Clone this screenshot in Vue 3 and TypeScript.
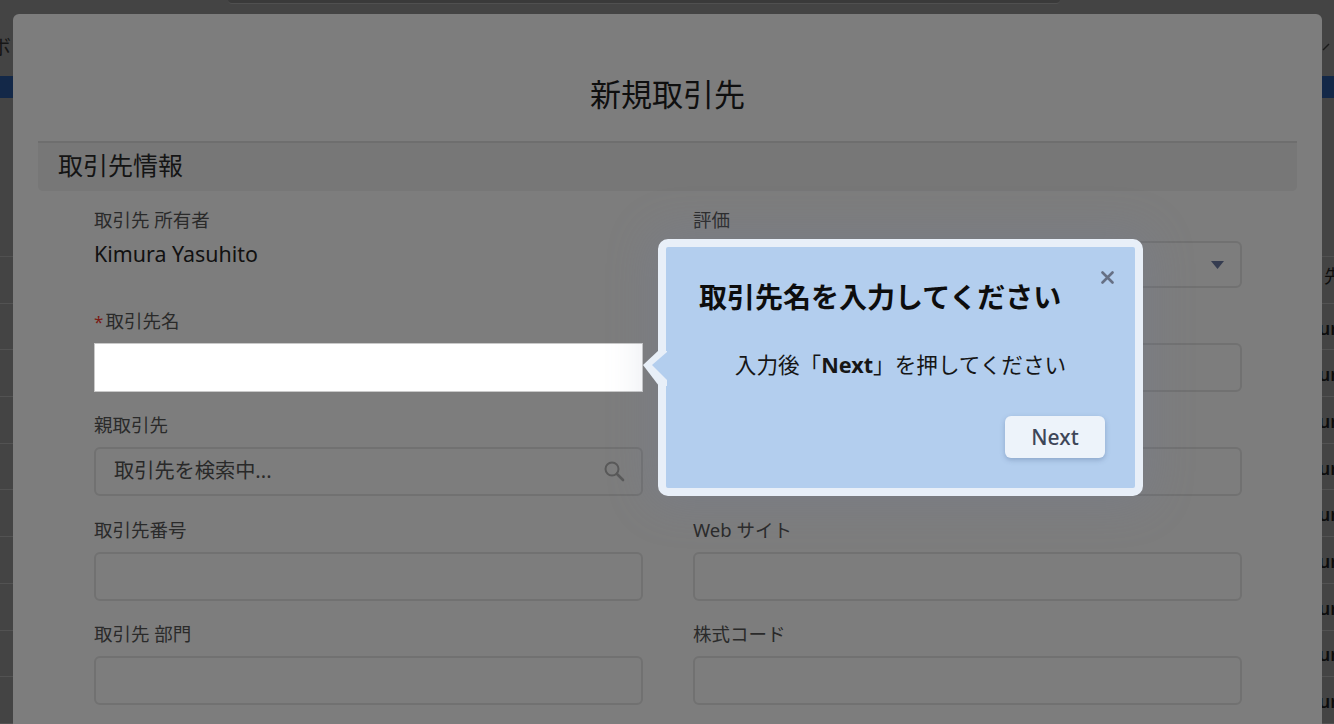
<script setup lang="ts">
interface Field {
  label: string
  kind: 'text' | 'value' | 'select' | 'input' | 'focus' | 'search'
  required?: boolean
  value?: string
}

const fields: Field[] = [
  { label: '取引先 所有者', kind: 'value', value: 'Kimura Yasuhito' },
  { label: '評価', kind: 'select' },
  { label: '取引先名', kind: 'focus', required: true },
  { label: '電話', kind: 'input' },
  { label: '親取引先', kind: 'search' },
  { label: 'Fax', kind: 'input' },
  { label: '取引先番号', kind: 'input' },
  { label: 'Web サイト', kind: 'input' },
  { label: '取引先 部門', kind: 'input' },
  { label: '株式コード', kind: 'input' },
]

const rows = ['先', 'ur', 'ur', 'ur', 'ur', 'ur', 'ur', 'ur', 'ur', 'ur']
</script>

<template>
  <div class="page">
    <div class="behind">
      <div class="top-strip"><div class="top-pill"></div></div>
      <div class="tabs">
        <span class="tab-text">ボ</span>
        <svg class="tab-check" width="12" height="12" viewBox="0 0 12 12">
          <path d="M4 9 L10 3" stroke="#1c1c1c" stroke-width="1.400" fill="none" />
        </svg>
      </div>
      <div class="blue-bar"></div>
      <div class="toolbar"></div>
      <div v-for="(cell, i) in rows" :key="i" class="list-row">
        <span class="list-cell" :class="{ head: i === 0 }">{{ cell }}</span>
      </div>
    </div>

    <section class="modal">
      <h1 class="modal-title">新規取引先</h1>
      <h2 class="section-head">取引先情報</h2>
      <div class="form">
        <div v-for="f in fields" :key="f.label" class="field">
          <div class="label"><span v-if="f.required" class="req">*</span>{{ f.label }}</div>
          <div v-if="f.kind === 'value'" class="value">{{ f.value }}</div>
          <div v-else-if="f.kind === 'select'" class="box select">
            <svg width="13" height="8" viewBox="0 0 13 8"><path d="M0 0H13L6.500 8Z" fill="#353c50" /></svg>
          </div>
          <div v-else-if="f.kind === 'focus'" class="box focus"></div>
          <div v-else-if="f.kind === 'search'" class="box search">
            <span class="search-text">取引先を検索中...</span>
            <svg class="search-icon" width="22" height="22" viewBox="0 0 22 22" fill="none" stroke="#595959">
              <circle cx="9" cy="9" r="6.500" stroke-width="2" />
              <path d="M14 14 L20 20" stroke-width="2.600" stroke-linecap="round" />
            </svg>
          </div>
          <div v-else class="box"></div>
        </div>
      </div>
    </section>

    <aside class="pop">
      <svg class="pop-arrow" width="24" height="36" viewBox="0 0 24 36">
        <path d="M0 15 L16 0 H24 V36 H16 Z" fill="#e8eff8" transform="translate(0 -1)" />
        <path d="M9 15 L24 2 V30 Z" fill="#b3ceee" transform="translate(0 -1)" />
      </svg>
      <button class="pop-close" aria-label="閉じる">
        <svg width="13" height="13" viewBox="0 0 13 13">
          <path d="M1.500 1.500 L11.500 11.500 M11.500 1.500 L1.500 11.500" stroke="#667085" stroke-width="2.600" stroke-linecap="round" />
        </svg>
      </button>
      <h3 class="pop-title">取引先名を入力してください</h3>
      <p class="pop-body">入力後「<b>Next</b>」を押してください</p>
      <div class="pop-foot"><button class="pop-next">Next</button></div>
    </aside>
  </div>
</template>

<style>
html, body { margin: 0; background: #444; }
</style>

<style scoped>
.page {
  position: relative;
  width: 1334px;
  height: 724px;
  overflow: hidden;
  background: #444;
  font-family: "Noto Sans", "Noto Sans CJK JP", sans-serif;
}
.top-strip { height: 14px; padding: 0 274px 0 228px; }
.top-pill { height: 3px; background: #3a3a3a; border-bottom: 1px solid #505050; border-radius: 0 0 4px 4px; }
.tabs { height: 62px; display: flex; justify-content: space-between; position: relative; }
.tab-text { font-size: 20px; color: #161616; margin-left: -9px; margin-top: 18px; }
.tab-check { margin: 27px 3px 0 0; }
.blue-bar { height: 22px; background: #132848; }
.toolbar { height: 158px; border-bottom: 1px solid #505050; }
.list-row {
  height: 45.700px;
  border-bottom: 1px solid #525252;
  display: flex;
  align-items: center;
  justify-content: flex-end;
  overflow: hidden;
}
.list-cell { font-size: 18px; color: #0d0d0d; font-weight: 600; margin-right: -4px; margin-top: 2px; }
.list-cell.head { font-weight: 400; margin-right: -8px; margin-top: -10px; }

.modal {
  position: absolute;
  left: 13px;
  top: 14px;
  width: 1309px;
  height: 730px;
  background: #7d7d7d;
  border-radius: 6px;
  box-sizing: border-box;
  padding: 0 25px;
}
.modal-title {
  margin: 0;
  height: 127px;
  box-sizing: border-box;
  padding-top: 57px;
  text-align: center;
  font-size: 31px;
  line-height: 46px;
  font-weight: 400;
  color: #0f0f0f;
}
.section-head {
  margin: 0;
  height: 50px;
  box-sizing: border-box;
  padding-left: 20px;
  border-top: 2px solid #6e6e6e;
  border-radius: 0 0 5px 5px;
  background: #777;
  font-size: 25px;
  line-height: 44px;
  font-weight: 400;
  color: #141414;
}
.form {
  display: grid;
  grid-template-columns: 549px 549px;
  column-gap: 50px;
  row-gap: 22.500px;
  padding: 18px 0 0 56px;
}
.field { min-width: 0; }
.label {
  height: 22px;
  margin-bottom: 11px;
  font-size: 18.500px;
  line-height: 22px;
  color: #2a2a2a;
  white-space: nowrap;
}
.req { color: #7a1a14; margin-right: 2px; font-size: 17px; }
.value { font-size: 21.400px; line-height: 46px; margin-top: -11px; height: 56px; color: #111; }
.box {
  height: 49px;
  box-sizing: border-box;
  border: 2px solid #717171;
  border-radius: 6px;
}
.select {
  height: 47px;
  margin-top: -1px;
  margin-bottom: -1px;
  display: flex;
  align-items: center;
  justify-content: flex-end;
  padding-right: 16px;
}
.focus { background: #fff; border: 1px solid #c9c9c9; border-radius: 0; }
.search {
  display: flex;
  align-items: center;
  justify-content: space-between;
  padding: 0 16px 0 18px;
  font-size: 20.200px;
  color: #292929;
}
.search-text { margin-bottom: 4px; }
.search-icon { margin-bottom: 2px; }

.pop {
  position: absolute;
  left: 658px;
  top: 239px;
  width: 485px;
  height: 257px;
  box-sizing: border-box;
  border: 8px solid #e8eff8;
  border-radius: 10px;
  background: #b3ceee;
  box-shadow: 0 0 45px 8px rgba(112, 128, 165, 0.22);
}
.pop-arrow { position: absolute; left: -23px; top: 104px; }
.pop-close {
  position: absolute;
  right: 21px;
  top: 24px;
  padding: 0;
  border: 0;
  background: none;
  line-height: 0;
}
.pop-title {
  margin: 0;
  padding: 30px 0 0 33px;
  font-size: 28px;
  line-height: 40px;
  font-weight: 700;
  color: #0d0d0d;
  white-space: nowrap;
}
.pop-body {
  margin: 33px 0 0;
  text-align: center;
  font-size: 21.600px;
  line-height: 30px;
  color: #161616;
}
.pop-foot { display: flex; justify-content: flex-end; margin: 36px 30px 0 0; }
.pop-next {
  width: 100px;
  height: 42px;
  padding: 0;
  border: 0;
  border-radius: 6px;
  background: #edf3fa;
  box-shadow: 0 2px 5px rgba(70, 95, 135, 0.35);
  font-family: inherit;
  font-size: 21px;
  font-weight: 500;
  color: #3e4658;
}
</style>
